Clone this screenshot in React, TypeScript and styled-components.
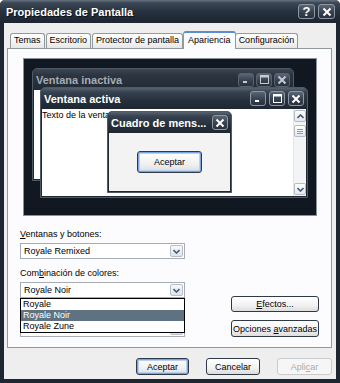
import React from "react";
import styled, { createGlobalStyle } from "styled-components";

const GlobalStyle = createGlobalStyle`
  html, body {
    margin: 0;
    padding: 0;
    background: #ffffff;
  }
  body {
    font-family: "Liberation Sans", Arial, sans-serif;
    font-size: 9px;
    color: #000;
  }
  * {
    box-sizing: border-box;
  }
`;

const Frame = styled.div`
  width: 340px;
  height: 383px;
  display: flex;
  flex-direction: column;
  background: #1d2631;
  border-radius: 5px 5px 0 0;
  overflow: hidden;
`;

const TitleBar = styled.div`
  height: 23px;
  flex: none;
  display: flex;
  align-items: center;
  justify-content: space-between;
  padding: 0 5px 0 6px;
  background: linear-gradient(
    to bottom,
    #66737f 0%,
    #3c4856 12%,
    #27323f 50%,
    #1c2530 100%
  );
`;

const TitleText = styled.span`
  font-weight: bold;
  font-size: 11px;
  color: #ffffff;
  text-shadow: 1px 1px 0 #0c1117;
`;

const Captions = styled.div<{ $gap?: number }>`
  display: flex;
  gap: ${(p) => p.$gap ?? 3}px;
`;

const CaptionButton = styled.div<{ $w?: number; $h?: number; $dim?: boolean }>`
  width: ${(p) => p.$w ?? 17}px;
  height: ${(p) => p.$h ?? 15}px;
  border: 1px solid ${(p) => (p.$dim ? "#58626e" : "#8d97a3")};
  border-radius: 3px;
  background: linear-gradient(to bottom, #5a6674 0%, #3a4452 50%, #28313c 100%);
  display: flex;
  align-items: center;
  justify-content: center;
  color: ${(p) => (p.$dim ? "#c4cad1" : "#ffffff")};
  font-weight: bold;
  font-size: 13px;
  line-height: 1;
`;

const Glyph = ({ kind, color = "#fff" }: { kind: string; color?: string }) => {
  if (kind === "close")
    return (
      <svg width="10" height="10" viewBox="0 0 10 10">
        <path d="M1.5 1.5 L8.5 8.5 M8.5 1.5 L1.5 8.5" stroke={color} strokeWidth="2" />
      </svg>
    );
  if (kind === "min")
    return (
      <svg width="9" height="9" viewBox="0 0 9 9">
        <rect x="1" y="6" width="4" height="2" fill={color} />
      </svg>
    );
  return (
    <svg width="9" height="9" viewBox="0 0 9 9">
      <rect x="0.5" y="0.5" width="8" height="8" fill="none" stroke={color} strokeWidth="1" />
      <rect x="0.5" y="0.5" width="8" height="2" fill={color} />
    </svg>
  );
};

const Body = styled.div`
  flex: 1;
  margin: 0 4px 4px 4px;
  background: #eeeeee;
  padding: 8px 4px 0 3px;
  display: flex;
  flex-direction: column;
`;

const TabRow = styled.div`
  display: flex;
  align-items: flex-end;
  padding-left: 3px;
  height: 17px;
  position: relative;
  z-index: 2;
`;

const Tab = styled.div<{ $selected?: boolean }>`
  height: ${(p) => (p.$selected ? 18 : 15)}px;
  margin: ${(p) => (p.$selected ? "0 -1px -1px -1px" : "0 1px 0 0")};
  padding: 0 ${(p) => (p.$selected ? 4 : 3)}px;
  border: 1px solid #919b9c;
  border-bottom: none;
  border-top: ${(p) => (p.$selected ? "2px solid #5b8ed0" : "1px solid #919b9c")};
  border-radius: 3px 3px 0 0;
  background: ${(p) =>
    p.$selected ? "#fcfcfe" : "linear-gradient(to bottom, #ffffff 0%, #f3f3f3 60%, #e6e6e6 100%)"};
  line-height: ${(p) => (p.$selected ? 14 : 13)}px;
  white-space: nowrap;
  position: relative;
  z-index: ${(p) => (p.$selected ? 2 : 1)};
`;

const Panel = styled.div`
  height: 300px;
  border: 1px solid #919b9c;
  background: #fcfcfe;
  display: flex;
  flex-direction: column;
  position: relative;
  z-index: 1;
`;

const Preview = styled.div`
  margin: 9px 0 0 15px;
  width: 294px;
  height: 158px;
  border: 1px solid #8a9199;
  background: #111821;
  position: relative;
  overflow: hidden;
`;

const PWin = styled.div<{ $x: number; $y: number; $w: number; $h: number }>`
  position: absolute;
  left: ${(p) => p.$x}px;
  top: ${(p) => p.$y}px;
  width: ${(p) => p.$w}px;
  height: ${(p) => p.$h}px;
  border: 1px solid #4f5a67;
  border-radius: 5px 5px 0 0;
  background: #1f2833;
  padding: 0 1px 1px 1px;
  display: flex;
  flex-direction: column;
`;

const PTitle = styled.div<{ $active?: boolean }>`
  height: 21px;
  flex: none;
  display: flex;
  align-items: center;
  justify-content: space-between;
  padding: 0 3px 0 3px;
  margin: 0 -1px;
  border-radius: 4px 4px 0 0;
  background: ${(p) =>
    p.$active
      ? "linear-gradient(to bottom, #56636f 0%, #36424f 20%, #26313d 60%, #1e2731 100%)"
      : "linear-gradient(to bottom, #3d4753 0%, #2b3440 30%, #222a34 100%)"};
  color: ${(p) => (p.$active ? "#ffffff" : "#a3acb6")};
  font-weight: bold;
  font-size: 11px;
  white-space: nowrap;
`;

const PBody = styled.div<{ $bg?: string }>`
  flex: 1;
  background: ${(p) => p.$bg ?? "#ffffff"};
  display: flex;
  overflow: hidden;
`;

const PText = styled.div`
  flex: 1;
  padding: 1px 0 0 0;
  white-space: nowrap;
`;

const ScrollBar = styled.div`
  width: 13px;
  flex: none;
  background: #f3f4f6;
  border-left: 1px solid #e2e4e8;
  display: flex;
  flex-direction: column;
  align-items: center;
  padding: 1px 0;
`;

const ScrollBtn = styled.div`
  width: 12px;
  height: 12px;
  border: 1px solid #b4bcc7;
  border-radius: 2px;
  background: linear-gradient(to bottom, #ffffff 0%, #e4e8ee 100%);
  display: flex;
  align-items: center;
  justify-content: center;
`;

const Thumb = styled(ScrollBtn)`
  margin-top: 3px;
  flex-direction: column;
  gap: 1px;
`;

const GripLine = styled.div`
  width: 6px;
  height: 1px;
  background: #8f98a4;
`;

const Spacer = styled.div`
  flex: 1;
`;

const MsgBody = styled(PBody)`
  align-items: center;
  justify-content: center;
`;

const Button = styled.button<{ $w?: number; $h?: number; $default?: boolean }>`
  width: ${(p) => p.$w ?? 54}px;
  height: ${(p) => p.$h ?? 17}px;
  padding: 0;
  font-family: "Liberation Sans", Arial, sans-serif;
  font-size: 9px;
  color: #000;
  border: 1px solid #2e3a48;
  border-radius: 3px;
  background: linear-gradient(to bottom, #ffffff 0%, #f1f1f1 60%, #dcdcdc 100%);
  box-shadow: ${(p) =>
    p.$default ? "inset 0 0 0 1px #7ba2e0, inset 0 0 0 2px #b9d0f2" : "none"};
  &:disabled {
    color: #acacac;
    border-color: #c9cbd0;
    background: #f6f6f6;
  }
`;

const Controls = styled.div`
  display: flex;
  margin-top: 13px;
  padding: 0 12px;
`;

const Fields = styled.div`
  width: 165px;
  display: flex;
  flex-direction: column;
  gap: 9px;
`;

const Field = styled.div`
  display: flex;
  flex-direction: column;
  gap: 3px;
  position: relative;
`;

const Label = styled.div`
  height: 11px;
  line-height: 11px;
  white-space: nowrap;
`;

const Select = styled.div`
  height: 16px;
  border: 1px solid #a6adb6;
  background: #ffffff;
  display: flex;
  align-items: center;
  justify-content: space-between;
  padding: 0 1px 0 3px;
`;

const SelectArrow = styled.div`
  width: 13px;
  height: 12px;
  border: 1px solid #b7bec8;
  border-radius: 2px;
  background: linear-gradient(to bottom, #f8f9fb 0%, #dfe3ea 100%);
  display: flex;
  align-items: center;
  justify-content: center;
`;

const SelectWrap = styled.div`
  position: relative;
`;

const DropList = styled.div`
  position: absolute;
  left: 0;
  right: 0;
  top: 100%;
  border: 1px solid #000;
  background: #ffffff;
  z-index: 5;
`;

const DropItem = styled.div<{ $selected?: boolean }>`
  height: 11px;
  line-height: 11px;
  padding-left: 2px;
  background: ${(p) => (p.$selected ? "#5f7282" : "transparent")};
  color: ${(p) => (p.$selected ? "#ffffff" : "#000")};
`;

const SideButtons = styled.div`
  margin-left: auto;
  display: flex;
  flex-direction: column;
  justify-content: flex-end;
  gap: 8px;
`;

const Footer = styled.div`
  display: flex;
  justify-content: flex-end;
  gap: 17px;
  margin-top: 10px;
`;

const Chevron = ({ up }: { up?: boolean }) => (
  <svg width="7" height="5" viewBox="0 0 7 5">
    <path
      d={up ? "M0.5 4 L3.5 1 L6.5 4" : "M0.5 1 L3.5 4 L6.5 1"}
      fill="none"
      stroke="#4b5a72"
      strokeWidth="1.6"
    />
  </svg>
);

const Dropdown = ({ value }: { value?: string }) => (
  <Select>
    <span>{value}</span>
    <SelectArrow>
      <Chevron />
    </SelectArrow>
  </Select>
);

const tabs = ["Temas", "Escritorio", "Protector de pantalla", "Apariencia", "Configuración"];

export default function App() {
  return (
    <>
      <GlobalStyle />
      <Frame>
        <TitleBar>
          <TitleText>Propiedades de Pantalla</TitleText>
          <Captions>
            <CaptionButton>?</CaptionButton>
            <CaptionButton>
              <Glyph kind="close" />
            </CaptionButton>
          </Captions>
        </TitleBar>
        <Body>
          <TabRow>
            {tabs.map((t) => (
              <Tab key={t} $selected={t === "Apariencia"}>
                {t}
              </Tab>
            ))}
          </TabRow>
          <Panel>
            <Preview>
              <PWin $x={8} $y={9} $w={262} $h={113}>
                <PTitle>
                  <span>Ventana inactiva</span>
                  <Captions $gap={2}>
                    <CaptionButton $w={16} $h={14} $dim>
                      <Glyph kind="min" color="#c4cad1" />
                    </CaptionButton>
                    <CaptionButton $w={16} $h={14} $dim>
                      <Glyph kind="max" color="#c4cad1" />
                    </CaptionButton>
                    <CaptionButton $w={16} $h={14} $dim>
                      <Glyph kind="close" color="#c4cad1" />
                    </CaptionButton>
                  </Captions>
                </PTitle>
                <PBody />
              </PWin>
              <PWin $x={16} $y={28} $w={268} $h={111}>
                <PTitle $active>
                  <span>Ventana activa</span>
                  <Captions>
                    <CaptionButton $w={16} $h={15}>
                      <Glyph kind="min" />
                    </CaptionButton>
                    <CaptionButton $w={16} $h={15}>
                      <Glyph kind="max" />
                    </CaptionButton>
                    <CaptionButton $w={16} $h={15}>
                      <Glyph kind="close" />
                    </CaptionButton>
                  </Captions>
                </PTitle>
                <PBody>
                  <PText>Texto de la ventana</PText>
                  <ScrollBar>
                    <ScrollBtn>
                      <Chevron up />
                    </ScrollBtn>
                    <Thumb>
                      <GripLine />
                      <GripLine />
                      <GripLine />
                    </Thumb>
                    <Spacer />
                    <ScrollBtn>
                      <Chevron />
                    </ScrollBtn>
                  </ScrollBar>
                </PBody>
              </PWin>
              <PWin $x={83} $y={52} $w={125} $h={82}>
                <PTitle $active>
                  <span>Cuadro de mens...</span>
                  <CaptionButton $w={16} $h={15}>
                    <Glyph kind="close" />
                  </CaptionButton>
                </PTitle>
                <MsgBody $bg="#f3f3f3">
                  <Button $w={65} $h={22} $default>
                    Aceptar
                  </Button>
                </MsgBody>
              </PWin>
            </Preview>
            <Controls>
              <Fields>
                <Field>
                  <Label>
                    <u>V</u>entanas y botones:
                  </Label>
                  <Dropdown value="Royale Remixed" />
                </Field>
                <Field>
                  <Label>
                    Com<u>b</u>inación de colores:
                  </Label>
                  <SelectWrap>
                    <Dropdown value="Royale Noir" />
                    <DropList>
                      <DropItem>Royale</DropItem>
                      <DropItem $selected>Royale Noir</DropItem>
                      <DropItem>Royale Zune</DropItem>
                    </DropList>
                  </SelectWrap>
                </Field>
                <Field>
                  <Label />
                  <Dropdown />
                </Field>
              </Fields>
              <SideButtons>
                <Button $w={88} $h={16}>
                  <u>E</u>fectos...
                </Button>
                <Button $w={88} $h={17}>
                  Opciones <u>a</u>vanzadas
                </Button>
              </SideButtons>
            </Controls>
          </Panel>
          <Footer>
            <Button $w={53} $default>
              Aceptar
            </Button>
            <Button $w={54}>Cancelar</Button>
            <Button $w={55} disabled>
              Apli<u>c</u>ar
            </Button>
          </Footer>
        </Body>
      </Frame>
    </>
  );
}
